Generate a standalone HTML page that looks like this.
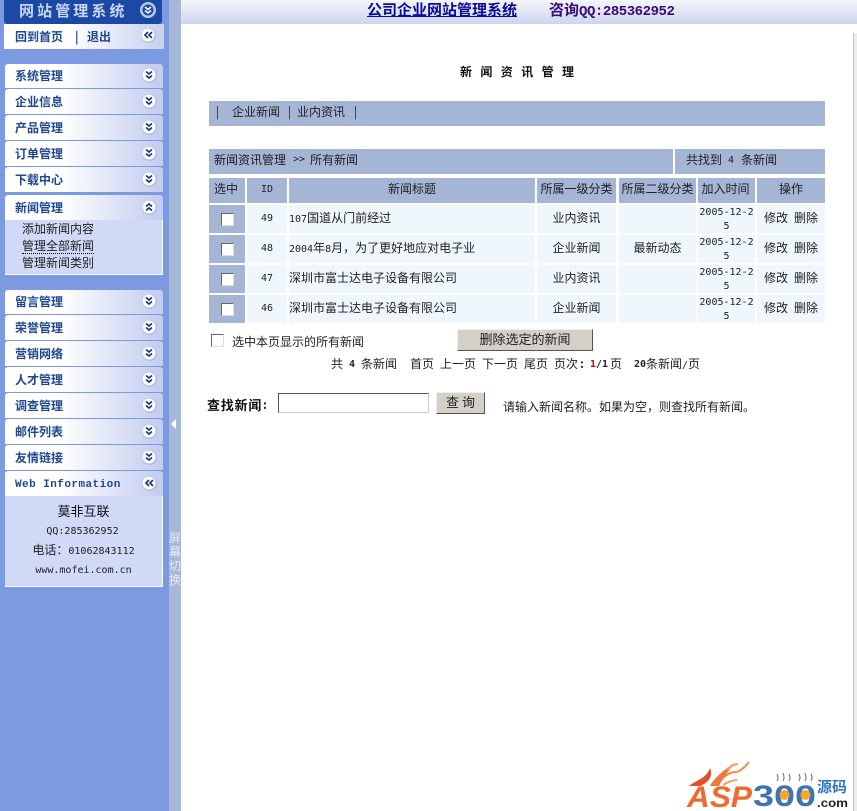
<!DOCTYPE html>
<html lang="zh"><head><meta charset="utf-8"><title>新闻资讯管理</title>
<style>
html,body{margin:0;padding:0;background:#fff;overflow:hidden}
body{width:857px;height:811px;position:relative;font:12px/14px "WenQuanYi Zen Hei","Noto Sans CJK SC",sans-serif;color:#222}
.a,.t,.b,.i{position:absolute}
.t{white-space:nowrap;line-height:14px;height:14px}
.c{text-align:center}
.m{font-family:"Liberation Mono","WenQuanYi Zen Hei",monospace}
.n{font-family:"DejaVu Sans Mono","WenQuanYi Zen Hei",monospace;font-size:10px}
.g{background:linear-gradient(90deg,#fff 0,#fff 35%,#c2cbef 100%);left:5px;width:158px;height:24px;border-radius:3px 3px 0 0}
.s{left:15px;font-weight:bold;color:#1f4790}
.h{background:#a4b5d6}
.v{background:#eff6fc}
.i{width:16px;height:16px}
.cb{position:absolute;width:11px;height:11px;background:#fff;border:1px solid;border-color:#666 #ddd #ddd #666;box-sizing:content-box}
.btn{position:absolute;background:#d4d0c8;border:1px solid;border-color:#eee #555 #555 #eee;box-sizing:border-box;text-align:center;font-size:13px}
.d{white-space:normal;word-break:break-all;height:28px}
</style></head><body>
<div class="a" style="left:0;top:0;width:169px;height:811px;background:#7b9ae2"></div>
<div class="a" style="left:169px;top:0;width:12px;height:811px;background:#a7b7d8"></div>
<div class="a" style="left:181px;top:0;width:676px;height:24px;background:linear-gradient(#f4f6fc,#cdd5ee)"></div>
<div class="a" style="left:853px;top:33px;width:3px;height:778px;background:#ececec;border-left:1px solid #c4c4c4"></div>

<div class="a" style="left:4px;top:0;width:158px;height:24px;background:#1a49a6;border-radius:0 0 3px 3px"></div>
<div class="t" style="left:19px;top:4px;font-size:15px;letter-spacing:3.1px;color:#c9d8f6;font-weight:bold">网站管理系统</div>
<div class="a" style="left:4px;top:24px;width:160px;height:25px;background:linear-gradient(90deg,#fff 40%,#c8d0f0)"></div>
<div class="t s" style="top:30px">回到首页</div>
<div class="t s" style="left:75px;top:30px">|</div>
<div class="t s" style="left:87px;top:30px">退出</div>

<div class="a g" style="top:64px"></div><div class="t s" style="top:69px">系统管理</div>
<div class="a g" style="top:89px;height:25px"></div><div class="t s" style="top:95px">企业信息</div>
<div class="a g" style="top:115px;height:25px"></div><div class="t s" style="top:121px">产品管理</div>
<div class="a g" style="top:141px;height:25px"></div><div class="t s" style="top:147px">订单管理</div>
<div class="a g" style="top:167px;height:25px"></div><div class="t s" style="top:173px">下载中心</div>
<div class="a g" style="top:195px;height:25px"></div><div class="t s" style="top:201px">新闻管理</div>
<div class="a" style="left:5px;top:220px;width:157px;height:54px;background:#d0d9f5;border:solid #fff;border-width:0 1px 1px 0"></div>
<div class="t" style="left:22px;top:222px">添加新闻内容</div>
<div class="t" style="left:22px;top:239px;border-bottom:1px dotted #000">管理全部新闻</div>
<div class="t" style="left:22px;top:256px">管理新闻类别</div>

<div class="a g" style="top:290px"></div><div class="t s" style="top:295px">留言管理</div>
<div class="a g" style="top:315px;height:25px"></div><div class="t s" style="top:321px">荣誉管理</div>
<div class="a g" style="top:341px;height:25px"></div><div class="t s" style="top:347px">营销网络</div>
<div class="a g" style="top:367px;height:25px"></div><div class="t s" style="top:373px">人才管理</div>
<div class="a g" style="top:393px;height:25px"></div><div class="t s" style="top:399px">调查管理</div>
<div class="a g" style="top:419px;height:25px"></div><div class="t s" style="top:425px">邮件列表</div>
<div class="a g" style="top:445px;height:25px"></div><div class="t s" style="top:451px">友情链接</div>
<div class="a g" style="top:471px;height:25px"></div><div class="t s m" style="top:478px;font-size:11px;letter-spacing:.45px">Web Information</div>
<div class="a" style="left:5px;top:496px;width:157px;height:90px;background:#d0d9f5;border:solid #fff;border-width:0 1px 1px 0"></div>
<div class="t c" style="left:5px;width:157px;top:504px;font-size:13px;color:#111">莫非互联</div>
<div class="t c n" style="left:4px;width:157px;top:525px">QQ:285362952</div>
<div class="t c" style="left:5px;width:157px;top:543px"><span>电话：</span><span class="n">01062843112</span></div>
<div class="t c n" style="left:5px;width:157px;top:564px;letter-spacing:0">www.mofei.com.cn</div>

<svg class="i" style="left:140px;top:2px" viewBox="0 0 16 16"><circle cx="8" cy="8" r="8" fill="#b8c8ee"/><circle cx="8" cy="8" r="5.5" fill="#1a49a6"/><path d="M5 5l3 2.5L11 5M5 8.5l3 2.5 3-2.5" fill="none" stroke="#fff" stroke-width="1.6"/></svg>
<svg class="i" style="left:140px;top:27px" viewBox="0 0 16 16"><circle cx="8.5" cy="8.5" r="7.5" fill="#aebbe6"/><circle cx="8" cy="8" r="6.5" fill="#fff"/><path d="M8 5L5 8l3 3M12 5L9 8l3 3" fill="none" stroke="#123a80" stroke-width="1.7"/></svg>
<svg class="i" style="left:141px;top:67px" viewBox="0 0 16 16"><circle cx="8.5" cy="8.5" r="7.5" fill="#aebbe6"/><circle cx="8" cy="8" r="6.5" fill="#fff"/><path d="M5 4.5l3 2.5 3-2.5M5 8.5l3 2.5 3-2.5" fill="none" stroke="#123a80" stroke-width="1.7"/></svg>
<svg class="i" style="left:141px;top:93px" viewBox="0 0 16 16"><circle cx="8.5" cy="8.5" r="7.5" fill="#aebbe6"/><circle cx="8" cy="8" r="6.5" fill="#fff"/><path d="M5 4.5l3 2.5 3-2.5M5 8.5l3 2.5 3-2.5" fill="none" stroke="#123a80" stroke-width="1.7"/></svg>
<svg class="i" style="left:141px;top:119px" viewBox="0 0 16 16"><circle cx="8.5" cy="8.5" r="7.5" fill="#aebbe6"/><circle cx="8" cy="8" r="6.5" fill="#fff"/><path d="M5 4.5l3 2.5 3-2.5M5 8.5l3 2.5 3-2.5" fill="none" stroke="#123a80" stroke-width="1.7"/></svg>
<svg class="i" style="left:141px;top:145px" viewBox="0 0 16 16"><circle cx="8.5" cy="8.5" r="7.5" fill="#aebbe6"/><circle cx="8" cy="8" r="6.5" fill="#fff"/><path d="M5 4.5l3 2.5 3-2.5M5 8.5l3 2.5 3-2.5" fill="none" stroke="#123a80" stroke-width="1.7"/></svg>
<svg class="i" style="left:141px;top:171px" viewBox="0 0 16 16"><circle cx="8.5" cy="8.5" r="7.5" fill="#aebbe6"/><circle cx="8" cy="8" r="6.5" fill="#fff"/><path d="M5 4.5l3 2.5 3-2.5M5 8.5l3 2.5 3-2.5" fill="none" stroke="#123a80" stroke-width="1.7"/></svg>
<svg class="i" style="left:141px;top:199px" viewBox="0 0 16 16"><circle cx="8.5" cy="8.5" r="7.5" fill="#aebbe6"/><circle cx="8" cy="8" r="6.5" fill="#fff"/><path d="M5 7.5L8 5l3 2.5M5 11.5L8 9l3 2.5" fill="none" stroke="#123a80" stroke-width="1.7"/></svg>
<svg class="i" style="left:141px;top:293px" viewBox="0 0 16 16"><circle cx="8.5" cy="8.5" r="7.5" fill="#aebbe6"/><circle cx="8" cy="8" r="6.5" fill="#fff"/><path d="M5 4.5l3 2.5 3-2.5M5 8.5l3 2.5 3-2.5" fill="none" stroke="#123a80" stroke-width="1.7"/></svg>
<svg class="i" style="left:141px;top:319px" viewBox="0 0 16 16"><circle cx="8.5" cy="8.5" r="7.5" fill="#aebbe6"/><circle cx="8" cy="8" r="6.5" fill="#fff"/><path d="M5 4.5l3 2.5 3-2.5M5 8.5l3 2.5 3-2.5" fill="none" stroke="#123a80" stroke-width="1.7"/></svg>
<svg class="i" style="left:141px;top:345px" viewBox="0 0 16 16"><circle cx="8.5" cy="8.5" r="7.5" fill="#aebbe6"/><circle cx="8" cy="8" r="6.5" fill="#fff"/><path d="M5 4.5l3 2.5 3-2.5M5 8.5l3 2.5 3-2.5" fill="none" stroke="#123a80" stroke-width="1.7"/></svg>
<svg class="i" style="left:141px;top:371px" viewBox="0 0 16 16"><circle cx="8.5" cy="8.5" r="7.5" fill="#aebbe6"/><circle cx="8" cy="8" r="6.5" fill="#fff"/><path d="M5 4.5l3 2.5 3-2.5M5 8.5l3 2.5 3-2.5" fill="none" stroke="#123a80" stroke-width="1.7"/></svg>
<svg class="i" style="left:141px;top:397px" viewBox="0 0 16 16"><circle cx="8.5" cy="8.5" r="7.5" fill="#aebbe6"/><circle cx="8" cy="8" r="6.5" fill="#fff"/><path d="M5 4.5l3 2.5 3-2.5M5 8.5l3 2.5 3-2.5" fill="none" stroke="#123a80" stroke-width="1.7"/></svg>
<svg class="i" style="left:141px;top:423px" viewBox="0 0 16 16"><circle cx="8.5" cy="8.5" r="7.5" fill="#aebbe6"/><circle cx="8" cy="8" r="6.5" fill="#fff"/><path d="M5 4.5l3 2.5 3-2.5M5 8.5l3 2.5 3-2.5" fill="none" stroke="#123a80" stroke-width="1.7"/></svg>
<svg class="i" style="left:141px;top:449px" viewBox="0 0 16 16"><circle cx="8.5" cy="8.5" r="7.5" fill="#aebbe6"/><circle cx="8" cy="8" r="6.5" fill="#fff"/><path d="M5 4.5l3 2.5 3-2.5M5 8.5l3 2.5 3-2.5" fill="none" stroke="#123a80" stroke-width="1.7"/></svg>
<svg class="i" style="left:141px;top:475px" viewBox="0 0 16 16"><circle cx="8.5" cy="8.5" r="7.5" fill="#aebbe6"/><circle cx="8" cy="8" r="6.5" fill="#fff"/><path d="M8 5L5 8l3 3M12 5L9 8l3 3" fill="none" stroke="#123a80" stroke-width="1.7"/></svg>

<svg class="a" style="left:170px;top:419px" width="8" height="10" viewBox="0 0 8 10"><path d="M6 0v10L1 5z" fill="#fff"/></svg>
<div class="t" style="left:169px;top:531px;width:12px;font-size:12px;line-height:14px;height:auto;white-space:normal;color:#e6ebf6">屏幕切换</div>

<div class="t" style="left:367px;top:3px;font-size:15px;font-weight:bold;color:#0a0a96;text-decoration:underline">公司企业网站管理系统</div>
<div class="t m" style="left:549px;top:3px;font-size:14px;font-weight:bold;color:#3a0a78;letter-spacing:-.45px"><span style="font-size:15px;letter-spacing:0;font-family:'WenQuanYi Zen Hei','Noto Sans CJK SC',sans-serif">咨询</span>QQ:285362952</div>

<div class="t" style="left:460px;top:65px;font-weight:bold;letter-spacing:8.4px;color:#111">新闻资讯管理</div>
<div class="a h" style="left:209px;top:101px;width:616px;height:25px"></div>
<div class="t" style="left:216px;top:105px">|</div>
<div class="t" style="left:232px;top:105px">企业新闻</div>
<div class="t" style="left:288px;top:105px">|</div>
<div class="t" style="left:297px;top:105px">业内资讯</div>
<div class="t" style="left:354px;top:105px">|</div>

<div class="a h" style="left:209px;top:149px;width:464px;height:25px"></div>
<div class="a h" style="left:675px;top:149px;width:150px;height:25px"></div>
<div class="t" style="left:214px;top:153px">新闻资讯管理</div>
<div class="t n" style="left:293px;top:153px">&gt;&gt;</div>
<div class="t" style="left:310px;top:153px">所有新闻</div>
<div class="t" style="left:686px;top:153px">共找到</div>
<div class="t n" style="left:728px;top:154px">4</div>
<div class="t" style="left:741px;top:153px">条新闻</div>

<div class="a h" style="left:209px;top:178px;width:36px;height:25px"></div>
<div class="a h" style="left:247px;top:178px;width:40px;height:25px"></div>
<div class="a h" style="left:289px;top:178px;width:246px;height:25px"></div>
<div class="a h" style="left:537px;top:178px;width:79px;height:25px"></div>
<div class="a h" style="left:619px;top:178px;width:77px;height:25px"></div>
<div class="a h" style="left:698px;top:178px;width:57px;height:25px"></div>
<div class="a h" style="left:757px;top:178px;width:68px;height:25px"></div>
<div class="t c" style="left:208px;width:36px;top:182px">选中</div>
<div class="t c n" style="left:247px;width:40px;top:183px">ID</div>
<div class="t c" style="left:289px;width:246px;top:182px">新闻标题</div>
<div class="t c" style="left:537px;width:79px;top:182px">所属一级分类</div>
<div class="t c" style="left:619px;width:77px;top:182px">所属二级分类</div>
<div class="t c" style="left:697px;width:57px;top:182px">加入时间</div>
<div class="t c" style="left:757px;width:68px;top:182px">操作</div>

<div class="a h" style="left:209px;top:205px;width:36px;height:28px"></div>
<div class="a v" style="left:247px;top:205px;width:578px;height:28px"></div>
<div class="a h" style="left:209px;top:235px;width:36px;height:28px"></div>
<div class="a v" style="left:247px;top:235px;width:578px;height:28px"></div>
<div class="a h" style="left:209px;top:265px;width:36px;height:28px"></div>
<div class="a v" style="left:247px;top:265px;width:578px;height:28px"></div>
<div class="a h" style="left:209px;top:295px;width:36px;height:28px"></div>
<div class="a v" style="left:247px;top:295px;width:578px;height:28px"></div>
<div class="a" style="left:287px;top:205px;width:2px;height:118px;background:#fff"></div>
<div class="a" style="left:535px;top:205px;width:2px;height:118px;background:#fff"></div>
<div class="a" style="left:616px;top:205px;width:3px;height:118px;background:#fff"></div>
<div class="a" style="left:696px;top:205px;width:2px;height:118px;background:#fff"></div>
<div class="a" style="left:755px;top:205px;width:2px;height:118px;background:#fff"></div>

<div class="cb" style="left:221px;top:213px"></div>
<div class="cb" style="left:221px;top:243px"></div>
<div class="cb" style="left:221px;top:273px"></div>
<div class="cb" style="left:221px;top:303px"></div>

<div class="t c n" style="left:247px;width:40px;top:212px">49</div>
<div class="t" style="left:289px;top:211px"><span class="n">107</span>国道从门前经过</div>
<div class="t c" style="left:537px;width:79px;top:211px">业内资讯</div>
<div class="t c n d" style="left:698px;width:57px;top:206px">2005-12-2 5</div>
<div class="t" style="left:764px;top:211px">修改</div><div class="t" style="left:794px;top:211px">删除</div>

<div class="t c n" style="left:247px;width:40px;top:242px">48</div>
<div class="t" style="left:289px;top:241px"><span class="n">2004</span>年<span class="n">8</span>月，为了更好地应对电子业</div>
<div class="t c" style="left:537px;width:79px;top:241px">企业新闻</div>
<div class="t c" style="left:619px;width:77px;top:241px">最新动态</div>
<div class="t c n d" style="left:698px;width:57px;top:236px">2005-12-2 5</div>
<div class="t" style="left:764px;top:241px">修改</div><div class="t" style="left:794px;top:241px">删除</div>

<div class="t c n" style="left:247px;width:40px;top:272px">47</div>
<div class="t" style="left:289px;top:271px">深圳市富士达电子设备有限公司</div>
<div class="t c" style="left:537px;width:79px;top:271px">业内资讯</div>
<div class="t c n d" style="left:698px;width:57px;top:266px">2005-12-2 5</div>
<div class="t" style="left:764px;top:271px">修改</div><div class="t" style="left:794px;top:271px">删除</div>

<div class="t c n" style="left:247px;width:40px;top:302px">46</div>
<div class="t" style="left:289px;top:301px">深圳市富士达电子设备有限公司</div>
<div class="t c" style="left:537px;width:79px;top:301px">企业新闻</div>
<div class="t c n d" style="left:698px;width:57px;top:296px">2005-12-2 5</div>
<div class="t" style="left:764px;top:301px">修改</div><div class="t" style="left:794px;top:301px">删除</div>

<div class="cb" style="left:211px;top:334px"></div>
<div class="t" style="left:232px;top:335px">选中本页显示的所有新闻</div>
<div class="btn" style="left:457px;top:329px;width:136px;height:22px;line-height:18px">删除选定的新闻</div>

<div class="t" style="left:331px;top:357px">共</div>
<div class="t n" style="left:349px;top:358px;font-weight:bold">4</div>
<div class="t" style="left:361px;top:357px">条新闻</div>
<div class="t" style="left:410px;top:357px">首页</div>
<div class="t" style="left:440px;top:357px">上一页</div>
<div class="t" style="left:482px;top:357px">下一页</div>
<div class="t" style="left:524px;top:357px">尾页</div>
<div class="t" style="left:554px;top:357px">页次</div>
<div class="t" style="left:580px;top:357px;font-weight:bold">:</div>
<div class="t n" style="left:590px;top:358px;font-weight:bold;color:#b01010">1</div>
<div class="t n" style="left:596px;top:358px;font-weight:bold">/1</div>
<div class="t" style="left:610px;top:357px">页</div>
<div class="t n" style="left:634px;top:358px;font-weight:bold">20</div>
<div class="t" style="left:646px;top:357px">条新闻<span class="n">/</span>页</div>

<div class="t" style="left:207px;top:398px;font-weight:bold;color:#111;font-size:13px;letter-spacing:.8px">查找新闻</div>
<div class="t" style="left:263px;top:398px;font-weight:bold;color:#111">:</div>
<div class="a" style="left:278px;top:393px;width:151px;height:20px;box-sizing:border-box;background:#fff;border:1px solid;border-color:#555 #ccc #ccc #555"></div>
<div class="btn" style="left:436px;top:392px;width:49px;height:22px;line-height:17px">查&nbsp;询</div>
<div class="t" style="left:503px;top:400px">请输入新闻名称。如果为空，则查找所有新闻。</div>

<svg class="a" style="left:685px;top:755px" width="168" height="56" viewBox="0 0 168 56">
<path d="M4 31C11 25 21 24 25 13C28 20 25 27 15 31Z" fill="#e2502a"/>
<path d="M25 31C29 23 38 16 49 8C44 16 38 23 34 31Z" fill="#ee7a3a"/>
<path d="M37 24q7-7 13-7t14-10" fill="none" stroke="#f28a4a" stroke-width="2"/>
<path d="M42 15q6-6 11-6 M38 30q8-5 14-5" fill="none" stroke="#f5a060" stroke-width="2"/>
<text x="2" y="52" font-family="Liberation Sans" font-weight="bold" font-style="italic" font-size="30" fill="#ee6a30" textLength="65" lengthAdjust="spacingAndGlyphs">ASP</text>
<text x="68" y="51" font-family="Liberation Sans" font-weight="bold" font-size="30" fill="#3f74b4" textLength="63" lengthAdjust="spacingAndGlyphs">300</text>
<circle cx="99.5" cy="40" r="5" fill="#f2a830"/><circle cx="120.5" cy="40" r="5" fill="#f2a830"/>
<path d="M92 26q2-3 0-7M98 26q2-3 0-8M104 26q2-3 0-7M114 26q2-3 0-7M120 26q2-3 0-8M126 26q2-3 0-7" fill="none" stroke="#667" stroke-width="1"/>
<text x="132" y="37" font-family="WenQuanYi Zen Hei,Noto Sans CJK SC,sans-serif" font-weight="bold" font-size="15" fill="#2f78c0">源码</text>
<text x="132" y="52" font-family="Liberation Sans" font-weight="bold" font-size="12" fill="#222" textLength="31" lengthAdjust="spacingAndGlyphs">.com</text>
</svg>
</body></html>
